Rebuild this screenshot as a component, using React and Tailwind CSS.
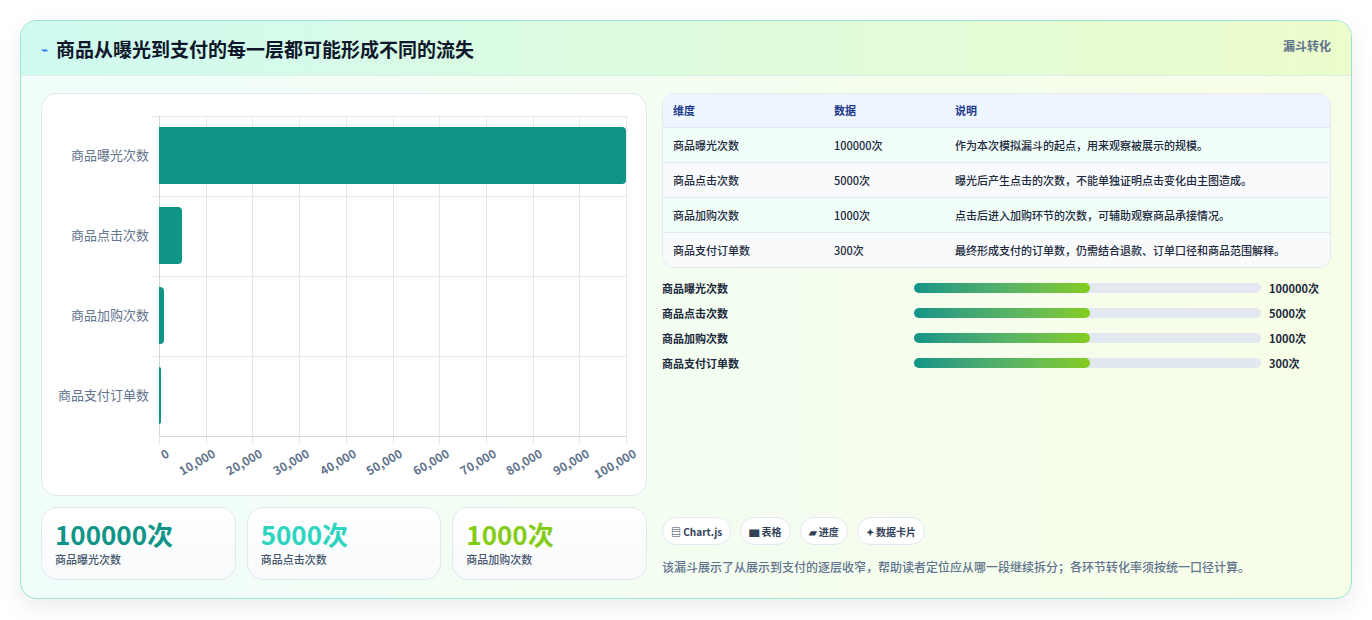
import React from "react";

const F = { fontFamily: '"Noto Sans CJK SC", "Noto Sans", sans-serif' };
const rows = [
  ["商品曝光次数", "100000次", "作为本次模拟漏斗的起点，用来观察被展示的规模。", 100000],
  ["商品点击次数", "5000次", "曝光后产生点击的次数，不能单独证明点击变化由主图造成。", 5000],
  ["商品加购次数", "1000次", "点击后进入加购环节的次数，可辅助观察商品承接情况。", 1000],
  ["商品支付订单数", "300次", "最终形成支付的订单数，仍需结合退款、订单口径和商品范围解释。", 300],
];
const ticks = ["0", "10,000", "20,000", "30,000", "40,000", "50,000", "60,000", "70,000", "80,000", "90,000", "100,000"];

function Chart() {
  const W = 467, H = 320;
  return (
    <div className="relative h-[403px] rounded-2xl border border-slate-200 bg-white">
      <div className="absolute left-[117px] top-[22px]" style={{ width: W, height: H }}>
        {ticks.map((t, i) => (
          <div key={i} className="absolute top-0 h-[328px] w-px bg-gray-200" style={{ left: (i * W) / 10 }} />
        ))}
        {[0, 1, 2, 3].map((i) => (
          <div key={i} className="absolute left-[-8px] right-0 h-px bg-gray-200" style={{ top: i * 80 }} />
        ))}
        <div className="absolute left-0 right-0 h-px bg-gray-300" style={{ top: H }} />
        <div className="absolute top-0 left-0 w-px bg-gray-300" style={{ height: H }} />
        {rows.map((r, i) => (
          <React.Fragment key={i}>
            <div className="absolute rounded-r-[4px] bg-[#0f9488]" style={{ left: 0, top: i * 80 + 11, height: 57, width: Math.max(2, (r[3] / 100000) * W) }} />
            <div className="absolute right-[calc(100%+10px)] whitespace-nowrap text-[13px] text-slate-500" style={{ top: i * 80 + 29 }}>{r[0]}</div>
          </React.Fragment>
        ))}
        {ticks.map((t, i) => (
          <div key={i} className="absolute whitespace-nowrap text-[12px] font-bold text-slate-500 origin-top-right" style={{ right: W - (i * W) / 10 - 4, top: H + 8, transform: "rotate(-30deg)" }}>{t}</div>
        ))}
      </div>
    </div>
  );
}

export default function App() {
  return (
    <div className="min-h-[620px] bg-white p-5" style={F}>
      <div className="overflow-hidden rounded-2xl border border-[#99e6d4] bg-gradient-to-r from-[#f0fdfa] to-[#f7fee7] shadow-[0_8px_24px_rgba(0,0,0,0.08)]">
        <div className="flex h-[55px] items-start justify-between border-b border-[#dbeee8] bg-gradient-to-r from-[#cffaf0] to-[#ecfccb] px-5 pt-[14px]">
          <div className="flex items-center gap-2">
            <span className="text-[12px] text-blue-600">⌁</span>
            <span className="text-[19px] font-bold text-slate-900">商品从曝光到支付的每一层都可能形成不同的流失</span>
          </div>
          <span className="pt-[2px] text-[12px] font-bold text-slate-500">漏斗转化</span>
        </div>
        <div className="flex gap-[15px] px-5 pt-[17px] pb-[18px]">
          <div className="flex w-[606px] flex-col gap-[11px]">
            <Chart />
            <div className="flex gap-[11px]">
              {[["100000次", "text-[#0f9488]", "商品曝光次数"], ["5000次", "text-[#2dd4bf]", "商品点击次数"], ["1000次", "text-[#84cc16]", "商品加购次数"]].map((c) => (
                <div key={c[2]} className="h-[73px] flex-1 rounded-2xl border border-slate-200 bg-gradient-to-b from-white to-[#f8fafc] px-[13px] pt-[9px]">
                  <div className={`text-[26px] font-bold leading-[34px] ${c[1]}`}>{c[0]}</div>
                  <div className="text-[11px] font-medium text-slate-600">{c[2]}</div>
                </div>
              ))}
            </div>
          </div>
          <div className="flex flex-1 flex-col">
            <div className="overflow-hidden rounded-xl border border-slate-200 bg-white">
              <div className="flex h-[33px] items-center bg-[#eff6ff] px-[10px] text-[11px] font-bold text-[#1e3a8a]">
                <div className="w-[161px]">维度</div><div className="w-[121px]">数据</div><div>说明</div>
              </div>
              {rows.map((r, i) => (
                <div key={i} className={`flex h-[35px] items-center border-t border-slate-200 px-[10px] text-[11px] font-medium text-slate-800 ${i % 2 ? "bg-[#f8fafc]" : "bg-[#f0fdf9]"}`}>
                  <div className="w-[161px]">{r[0]}</div><div className="w-[121px]">{r[1]}</div><div>{r[2]}</div>
                </div>
              ))}
            </div>
            <div className="mt-[12px] flex flex-col gap-[9px]">
              {rows.map((r, i) => (
                <div key={i} className="flex h-[16px] items-center text-[11px] font-bold text-slate-800">
                  <div className="w-[252px]">{r[0]}</div>
                  <div className="h-[10px] w-[347px] rounded-full bg-[#e2e8f0]">
                    <div className="h-full w-[176px] rounded-full bg-gradient-to-r from-[#0f9488] to-[#84cc16]" />
                  </div>
                  <div className="ml-2">{r[1]}</div>
                </div>
              ))}
            </div>
            <div className="mt-auto flex gap-[9px]">
              {["▤ Chart.js", "▆ 表格", "▰ 进度", "✦ 数据卡片"].map((t) => (
                <div key={t} className="flex h-[28px] items-center rounded-full border border-slate-200 bg-white px-[8px] text-[10px] font-bold text-slate-700">{t}</div>
              ))}
            </div>
            <div className="mt-[13px] mb-[4px] text-[12px] font-medium text-slate-500">该漏斗展示了从展示到支付的逐层收窄，帮助读者定位应从哪一段继续拆分；各环节转化率须按统一口径计算。</div>
          </div>
        </div>
      </div>
    </div>
  );
}
